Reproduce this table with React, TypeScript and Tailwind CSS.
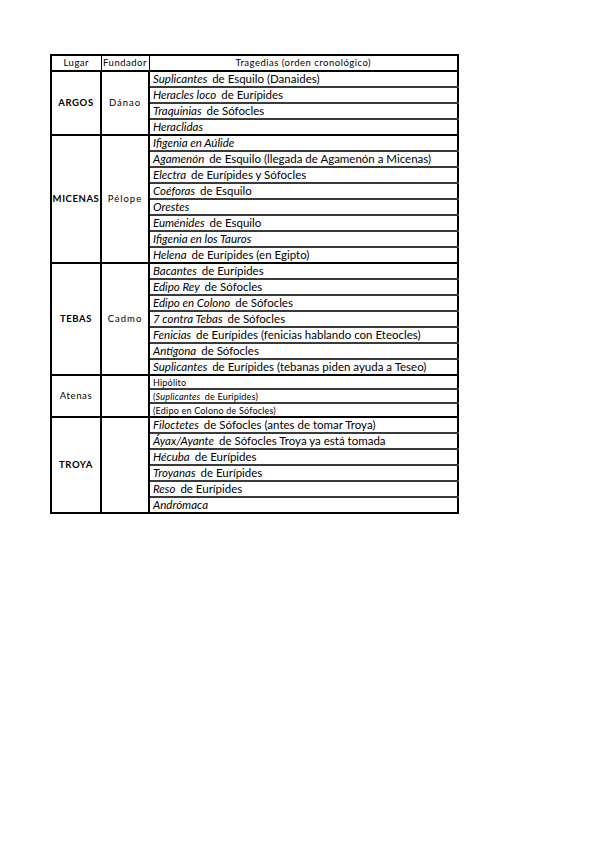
import React from 'react';

type Row = { t?: string; r?: string; small?: boolean; plain?: string };

const groups: { lugar: string; fundador: string; bold: boolean; h: string; rows: Row[] }[] = [
  {
    lugar: 'ARGOS', fundador: 'Dánao', bold: true, h: 'h-[16px]',
    rows: [
      { t: 'Suplicantes', r: ' de Esquilo (Danaides)' },
      { t: 'Heracles loco', r: ' de Eurípides' },
      { t: 'Traquinias', r: ' de Sófocles' },
      { t: 'Heraclidas' },
    ],
  },
  {
    lugar: 'MICENAS', fundador: 'Pélope', bold: true, h: 'h-[16px]',
    rows: [
      { t: 'Ifigenia en Aúlide' },
      { t: 'Agamenón', r: ' de Esquilo (llegada de Agamenón a Micenas)' },
      { t: 'Electra', r: ' de Eurípides y Sófocles' },
      { t: 'Coéforas', r: ' de Esquilo' },
      { t: 'Orestes' },
      { t: 'Euménides', r: ' de Esquilo' },
      { t: 'Ifigenia en los Tauros' },
      { t: 'Helena', r: ' de Eurípides (en Egipto)' },
    ],
  },
  {
    lugar: 'TEBAS', fundador: 'Cadmo', bold: true, h: 'h-[16px]',
    rows: [
      { t: 'Bacantes', r: ' de Eurípides' },
      { t: 'Edipo Rey', r: ' de Sófocles' },
      { t: 'Edipo en Colono', r: ' de Sófocles' },
      { t: '7 contra Tebas', r: ' de Sófocles' },
      { t: 'Fenicias', r: ' de Eurípides (fenicias hablando con Eteocles)' },
      { t: 'Antígona', r: ' de Sófocles' },
      { t: 'Suplicantes', r: ' de Eurípides (tebanas piden ayuda a Teseo)' },
    ],
  },
  {
    lugar: 'Atenas', fundador: '', bold: false, h: 'h-[14px]',
    rows: [
      { plain: 'Hipólito', small: true },
      { t: 'Suplicantes', r: ' de Eurípides)', small: true },
      { plain: '(Edipo en Colono de Sófocles)', small: true },
    ],
  },
  {
    lugar: 'TROYA', fundador: '', bold: true, h: 'h-[16px]',
    rows: [
      { t: 'Filoctetes', r: ' de Sófocles (antes de tomar Troya)' },
      { t: 'Áyax/Ayante', r: ' de Sófocles Troya ya está tomada' },
      { t: 'Hécuba', r: ' de Eurípides' },
      { t: 'Troyanas', r: ' de Eurípides' },
      { t: 'Reso', r: ' de Eurípides' },
      { t: 'Andrómaca' },
    ],
  },
];

export default function App() {
  return (
    <div className="w-[599px] h-[848px] bg-white text-black font-['Lato',sans-serif]">
      <div className="pt-[54px] pl-[50px]">
        <table className="w-[407px] border-collapse border-2 border-black table-fixed">
          <colgroup>
            <col className="w-[50px]" />
            <col className="w-[48px]" />
            <col className="w-[309px]" />
          </colgroup>
          <thead>
            <tr className="h-[16px] text-[9.5px] tracking-[0.5px]">
              <th className="font-normal border border-black leading-none">Lugar</th>
              <th className="font-normal border border-black leading-none">Fundador</th>
              <th className="font-normal border border-black border-b-2 leading-none">Tragedias (orden cronológico)</th>
            </tr>
          </thead>
          <tbody>
            {groups.map((g, gi) =>
              g.rows.map((row, ri) => (
                <tr key={gi + '-' + ri} className={g.h}>
                  {ri === 0 && (
                    <>
                      <td
                        rowSpan={g.rows.length}
                        className={`border-2 border-black text-center text-[9.5px] tracking-[0.6px] ${g.bold ? 'font-bold' : 'font-normal'}`}
                      >
                        {g.lugar}
                      </td>
                      <td
                        rowSpan={g.rows.length}
                        className="border-2 border-black text-center text-[9.5px] tracking-[1px]"
                      >
                        {g.fundador}
                      </td>
                    </>
                  )}
                  <td
                    className={`px-[3px] leading-none whitespace-nowrap border-b-2 border-[#3a3a3a] ${
                      row.small ? 'text-[9px] tracking-[0.2px]' : 'text-[11.5px]'
                    } ${ri === g.rows.length - 1 ? 'border-b-black' : ''}`}
                  >
                    {row.plain ? (
                      row.plain
                    ) : (
                      <>
                        {row.small && '('}
                        <span className="italic">{row.t}</span>
                        {row.r && <span className="ml-[2px]">{row.r}</span>}
                      </>
                    )}
                  </td>
                </tr>
              ))
            )}
          </tbody>
        </table>
      </div>
    </div>
  );
}
